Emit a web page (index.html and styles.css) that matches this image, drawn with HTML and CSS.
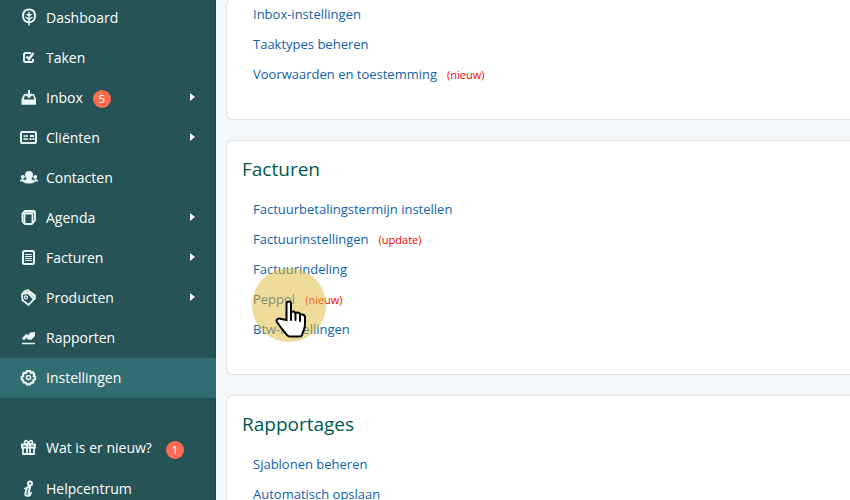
FILE: index.html
```html
<!DOCTYPE html>
<html lang="nl">
<head>
    <meta charset="UTF-8">
    <meta name="viewport" content="width=device-width, initial-scale=1.0">
    <title>Instellingen</title>
    <link rel="stylesheet" href="styles.css">
</head>
<body>
    <div class="page">
        <nav class="sidebar">
            <ul class="menu">
                <li><a href="#" class="menu-item">
                    <svg class="icon" viewBox="0 0 18 18"><path d="M9 1.500C5 1.500 3 4.300 3 8s2.500 6.200 6 6.200 6-2.500 6-6.200-2-6.500-6-6.500z" stroke-width="2"/><path d="M9 4v13.500M9 8L6.500 6M9 8l2.500-2M9 11.500L5.500 9M9 11.500L12.500 9" stroke-width="1.500"/></svg>
                    <span>Dashboard</span>
                </a></li>
                <li><a href="#" class="menu-item">
                    <svg class="icon" viewBox="0 0 18 18"><path d="M11 5H5.500Q4 5 4 6.500v6Q4 14 5.500 14h6q1.500 0 1.500-1.500V11"/><path d="M6.500 8.500L9 11l4.500-6" stroke-width="2.500"/></svg>
                    <span>Taken</span>
                </a></li>
                <li><a href="#" class="menu-item">
                    <svg class="icon" viewBox="0 0 18 18"><path class="fill" d="M4 6h3v1.500H5L3.500 12h11L13 7.500h-2V6h3l2 5v5.500H1.500V11z"/><path class="fill" d="M2 11.500h13.500v5H2z"/><path d="M9 2v7M6 6l3 3 3-3"/></svg>
                    <span>Inbox</span>
                    <span class="badge">5</span>
                    <span class="arrow"></span>
                </a></li>
                <li><a href="#" class="menu-item">
                    <svg class="icon" viewBox="0 0 18 18"><rect x="1" y="4" width="15" height="11" rx="1"/><path d="M3.500 8H8M3.500 11H8" stroke-width="1.500"/><path class="fill" d="M10 7h4v2h-4zM9.500 10h2v2h-2zM12.500 10h2v2h-2z"/></svg>
                    <span>Cliënten</span>
                    <span class="arrow"></span>
                </a></li>
                <li><a href="#" class="menu-item">
                    <svg class="icon" viewBox="0 0 18 18"><g class="fill"><circle cx="9" cy="7" r="4"/><path d="M6.500 9.500h5v2q3.500.5 3.500 2.500-2 1.500-6 1.500T3 14q0-2 3.500-2.500z"/><circle cx="2.800" cy="9" r="2"/><circle cx="15.200" cy="9" r="2"/><path d="M0 13.500Q0 11 3 11l1.500 2.500zM18 13.500Q18 11 15 11l-1.500 2.500z"/></g></svg>
                    <span>Contacten</span>
                </a></li>
                <li><a href="#" class="menu-item">
                    <svg class="icon" viewBox="0 0 18 18"><path d="M2.500 14V5.500L5 3h8.500Q15 3 15 4.500v8L12.500 15" stroke-width="1.800"/><rect x="4.500" y="5.500" width="8" height="10.500" rx="1" stroke-width="1.800"/><path d="M2.500 14l2 2M3 5h9.500L15 3.500" stroke-width="1.200"/></svg>
                    <span>Agenda</span>
                    <span class="arrow"></span>
                </a></li>
                <li><a href="#" class="menu-item">
                    <svg class="icon" viewBox="0 0 18 18"><rect x="3" y="3" width="11" height="13" rx="1.500"/><path d="M5 6.500h7M5 8.500h7M5 10.500h7M5 12.500h7" stroke-width="1"/></svg>
                    <span>Facturen</span>
                    <span class="arrow"></span>
                </a></li>
                <li><a href="#" class="menu-item">
                    <svg class="icon" viewBox="0 0 18 18"><path d="M2 6.500L8 5l6 6-5.500 6L2.500 12z" stroke-width="1.800"/><path d="M2 6.500Q4 2.500 8 2l7 5.500v3l-2 1.500M4 4.500L9 4l5.500 5" stroke-width="1.600"/><circle cx="6" cy="9.300" r="1.500" stroke-width="1.200"/></svg>
                    <span>Producten</span>
                    <span class="arrow"></span>
                </a></li>
                <li><a href="#" class="menu-item">
                    <svg class="icon" viewBox="0 0 18 18"><path d="M3 11.500L6.500 7.500l3 1.500L13 5.500" stroke-width="3"/><path d="M10 4.500l5-.5v4l-4 4-4.500-1z" class="fill"/><path d="M2 15.500h13" stroke-width="1.500"/></svg>
                    <span>Rapporten</span>
                </a></li>
                <li><a href="#" class="menu-item active">
                    <svg class="icon" viewBox="0 0 18 18"><path d="M7 3h3l.8 1.700 2-.4 1.600 2.200-.7 1.600 1.300 1v2l-1.600 1-.2 2.200-2 .6L10 16.300H7l-1-1.600-2.200-.2L3 12.300l-1.300-1.200v-2l1.500-1-.1-2.200 1-1.200 2 .3z" stroke-width="2.200"/><circle cx="8.500" cy="9.500" r="2" stroke-width="1.500"/></svg>
                    <span>Instellingen</span>
                </a></li>
            </ul>
            <ul class="menu menu-bottom">
                <li><a href="#" class="menu-item">
                    <svg class="icon" viewBox="0 0 18 18"><path d="M2 6.500h13v3H2zM3 9.500V16h11V9.500M7 6.500V16M10 6.500V16" stroke-width="1.800"/><path d="M8.500 6Q4 6 4.500 4T7 3q1 .5 1.500 3Q9 3.500 10 3q2-1 2.500 1t-4 2" stroke-width="1.600"/></svg>
                    <span>Wat is er nieuw?</span>
                    <span class="badge badge-new">1</span>
                </a></li>
                <li><a href="#" class="menu-item">
                    <svg class="icon" viewBox="0 0 18 18"><path d="M5.500 9.500L8 8h2l-1.500 6q0 1.500 2 .5L10 16q-3 1.500-4.500 0-.5-1 1-6z"/><circle cx="10" cy="4.500" r="2"/></svg>
                    <span>Helpcentrum</span>
                </a></li>
            </ul>
        </nav>

        <main class="content">
            <section class="card">
                <ul class="links">
                    <li><a href="#">Inbox-instellingen</a></li>
                    <li><a href="#">Taaktypes beheren</a></li>
                    <li><a href="#">Voorwaarden en toestemming</a><span class="tag">(nieuw)</span></li>
                </ul>
            </section>

            <section class="card">
                <h2>Facturen</h2>
                <ul class="links">
                    <li><a href="#">Factuurbetalingstermijn instellen</a></li>
                    <li><a href="#">Factuurinstellingen</a><span class="tag">(update)</span></li>
                    <li><a href="#">Factuurindeling</a></li>
                    <li class="current">
                        <a href="#">Peppol</a><span class="tag">(nieuw)</span>
                        <div class="pointer">
                            <svg viewBox="0 0 32 38"><path d="M11.500 20V4Q11.500 1.500 13.800 1.500T16 4v9q0-1.500 2-1.500t2.500 2q0-1 2-1t2.500 2q.5-.5 2.500 0 2.500.5 2.500 2.500V24q0 4-2 8l-1 3q-.5 1.500-2.500 1.500H15q-2 0-3-1.500l-5.500-6.500L2 22q-1-2 .5-3t4 0z" fill="#fff" stroke="#000" stroke-width="2"/><path d="M16 12v8M20.500 13v7M25 14.500V21" fill="none" stroke="#000" stroke-width="2" stroke-linecap="round"/></svg>
                        </div>
                    </li>
                    <li><a href="#">Btw-instellingen</a></li>
                </ul>
            </section>

            <section class="card">
                <h2>Rapportages</h2>
                <ul class="links">
                    <li><a href="#">Sjablonen beheren</a></li>
                    <li><a href="#">Automatisch opslaan</a></li>
                </ul>
            </section>
        </main>
    </div>
</body>
</html>
```

FILE: styles.css
```css
* {
    margin: 0;
    padding: 0;
    box-sizing: border-box;
}

body {
    height: 100vh;
    overflow: hidden;
    background: #f4f7fa;
    font-family: "Open Sans", sans-serif;
    font-size: 13px;
}

ul {
    list-style: none;
}

a {
    text-decoration: none;
}

.page {
    display: flex;
    min-height: 100vh;
    margin-top: -2px;
}

/* Sidebar */
.sidebar {
    flex: 0 0 216px;
    background: #265356;
    border-right: 1px solid #1f484c;
}

.menu-item {
    display: flex;
    align-items: center;
    height: 40px;
    padding: 0 20px 2px;
    color: #fff;
    font-size: 14px;
}

.menu-item.active {
    background: #326d72;
    margin-right: -1px;
}

.menu-bottom {
    display: grid;
    gap: 1px;
    margin-top: 30px;
}

.icon {
    width: 18px;
    height: 18px;
    margin-right: 8px;
    fill: none;
    stroke: #e9f7f6;
    stroke-width: 2;
}

.icon .fill {
    fill: #e9f7f6;
    stroke: none;
}

.badge {
    width: 18px;
    height: 18px;
    margin: 4px 0 0 10px;
    border-radius: 50%;
    background: #ff6c4f;
    font-size: 11px;
    line-height: 18px;
    text-align: center;
}

.badge-new {
    margin: 6px 0 0 14px;
}

.arrow {
    margin-left: auto;
    border-left: 5px solid #fff;
    border-top: 4px solid transparent;
    border-bottom: 4px solid transparent;
}

/* Content */
.content {
    flex: 1;
    display: flex;
    flex-direction: column;
    gap: 20px;
    padding-left: 10px;
}

.card {
    padding: 0 15px 30px;
    background: #fff;
    border: 1px solid #e1e4e6;
    border-right: 0;
    border-radius: 6px 0 0 6px;
}

.card h2 {
    padding: 13px 0 10px;
    color: #00594f;
    font-size: 19px;
    font-weight: 400;
    line-height: 30px;
}

.links {
    padding-left: 11px;
}

.links li {
    line-height: 30px;
    white-space: nowrap;
}

.links a {
    color: #1162a8;
}

.tag {
    margin-left: 10px;
    color: #f00;
    font-size: 11px;
    line-height: 16px;
}

.current {
    position: relative;
}

.pointer {
    position: absolute;
    top: -16px;
    left: -1px;
    z-index: 1;
    width: 74px;
    height: 74px;
    padding: 32px 0 0 23px;
    border-radius: 50%;
    background: rgba(223, 186, 55, 0.5);
    line-height: 0;
}

.pointer svg {
    width: 32px;
    height: 38px;
}
```
